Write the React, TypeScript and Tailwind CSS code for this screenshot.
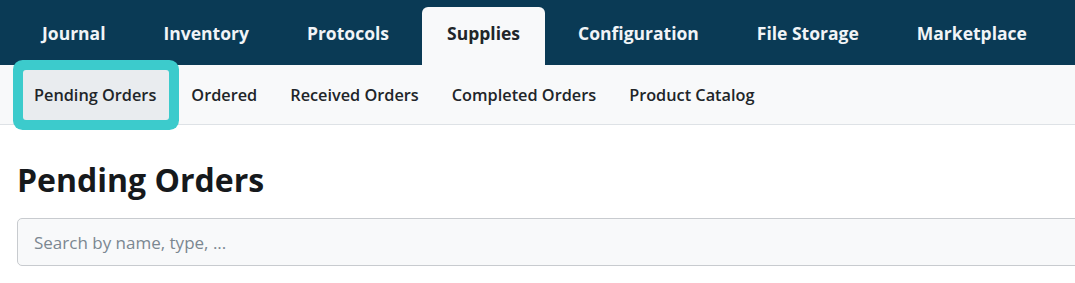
const mainTabs = [
  'Journal',
  'Inventory',
  'Protocols',
  'Supplies',
  'Configuration',
  'File Storage',
  'Marketplace',
];

const subTabs = [
  'Pending Orders',
  'Ordered',
  'Received Orders',
  'Completed Orders',
  'Product Catalog',
];

export default function App() {
  const active = 'Supplies';
  const activeSub = 'Pending Orders';

  return (
    <div className="min-h-[283px] w-[1075px] overflow-hidden bg-white font-['Open_Sans',sans-serif] text-[#212529]">
      <nav className="flex h-[65px] items-end gap-[8px] bg-[#0a3a55] px-[17px]">
        {mainTabs.map((tab) => (
          <a
            key={tab}
            className={
              tab === active
                ? 'flex h-[58px] items-center rounded-t-[6px] bg-[#f8f9fa] px-[25px] pb-[6px] text-[17.5px] font-bold text-[#212529]'
                : 'flex h-[58px] items-center px-[25px] pb-[6px] text-[17.5px] font-bold text-[#f1f4f7]'
            }
          >
            {tab}
          </a>
        ))}
      </nav>

      <div className="flex h-[60px] items-center gap-[11px] border-b border-[#dee2e6] bg-[#f8f9fa] px-[23px]">
        {subTabs.map((tab) => (
          <a
            key={tab}
            className={
              tab === activeSub
                ? 'relative flex h-[50px] items-center rounded-[3px] bg-[#e9ecef] pl-[11px] pr-[13px] pt-[2px] text-[16.3px] font-semibold text-[#212529] ring-[10px] ring-[#3ccbcc]'
                : 'flex h-[50px] items-center px-[11px] pt-[2px] text-[16.3px] font-semibold text-[#212529]'
            }
          >
            {tab}
          </a>
        ))}
      </div>

      <div className="px-[17px] pt-[34px]">
        <h1 className="text-[32px] font-bold leading-[42px] text-[#16191c]">Pending Orders</h1>
        <input
          type="text"
          placeholder="Search by name, type, ..."
          className="mt-[17px] h-[48px] w-[1100px] rounded-[5px] border border-[#c8cbcf] bg-[#f8f9fa] px-[16px] text-[17px] placeholder:text-[#7b8791] outline-none"
        />
      </div>
    </div>
  );
}
